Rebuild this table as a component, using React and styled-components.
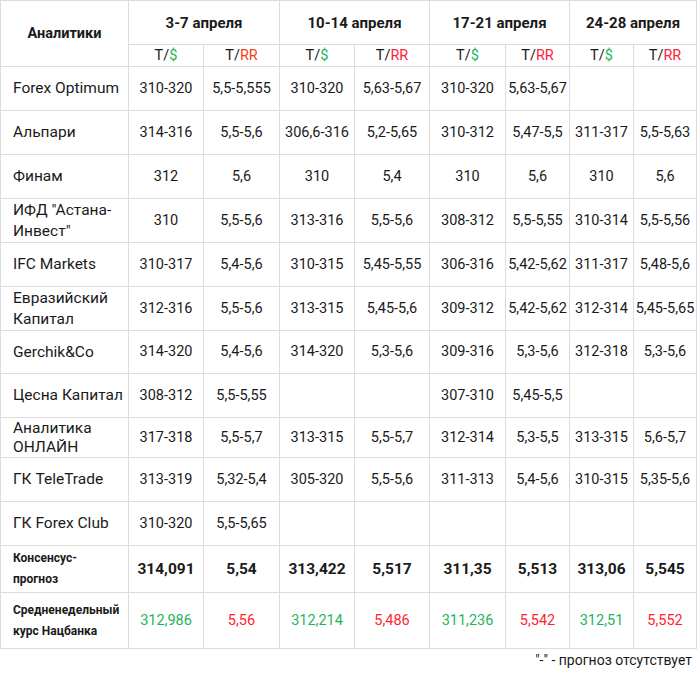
import React from 'react'
import styled, { createGlobalStyle } from 'styled-components'

const GlobalStyle = createGlobalStyle`
  body {
    margin: 0;
    background: #fff;
    font-family: Roboto, "Liberation Sans", sans-serif;
    color: #1a1a1a;
  }
`

const Table = styled.table`
  border-collapse: collapse;
  table-layout: fixed;
  width: 696px;
  font-size: 14px;
`

const Row = styled.tr`
  height: ${props => props.h}px;
`

const HeadCell = styled.th`
  border: 1px solid #dcdcdc;
  padding: 0;
  font-weight: bold;
  font-size: ${props => props.small ? 14.5 : 15}px;
  text-align: center;
  vertical-align: middle;
`

const SubCell = styled.td`
  border: 1px solid #dcdcdc;
  padding: 0;
  text-align: center;
  font-size: 14.5px;
  line-height: 20px;
`

const NameCell = styled.td`
  border: 1px solid #dcdcdc;
  padding: 0 2px 0 12px;
  line-height: ${props => props.tight ? 19 : 21}px;
  font-weight: ${props => props.bold ? 'bold' : 'normal'};
  font-size: ${props => props.bold ? 12 : 15.5}px;
`

const Cell = styled.td`
  border: 1px solid #dcdcdc;
  padding: 0 1px;
  text-align: center;
  white-space: nowrap;
  line-height: 20px;
  font-weight: ${props => props.bold ? 'bold' : 'normal'};
  font-size: ${props => props.bold ? 15.5 : 14.5}px;
  color: ${props => props.tone === 'green' ? '#1db55c' : props.tone === 'red' ? '#ff1f2e' : '#1a1a1a'};
`

const Green = styled.span`
  color: #1db55c;
`

const Red = styled.span`
  color: ${props => props.orange ? '#ff3a1a' : '#ff2040'};
`

const Note = styled.div`
  width: 696px;
  text-align: right;
  font-size: 14px;
  line-height: 22px;
  padding-right: 4px;
  box-sizing: border-box;
`

const widths = [128, 75, 76, 75, 75, 76, 64, 64, 63]
const weeks = ['3-7 апреля', '10-14 апреля', '17-21 апреля', '24-28 апреля']

const rows = [
  { name: ['Forex Optimum'], h: 44, v: ['310-320', '5,5-5,555', '310-320', '5,63-5,67', '310-320', '5,63-5,67', '', ''] },
  { name: ['Альпари'], h: 44, v: ['314-316', '5,5-5,6', '306,6-316', '5,2-5,65', '310-312', '5,47-5,5', '311-317', '5,5-5,63'] },
  { name: ['Финам'], h: 44, v: ['312', '5,6', '310', '5,4', '310', '5,6', '310', '5,6'] },
  { name: ['ИФД "Астана-', 'Инвест"'], h: 44, v: ['310', '5,5-5,6', '313-316', '5,5-5,6', '308-312', '5,5-5,55', '310-314', '5,5-5,56'] },
  { name: ['IFC Markets'], h: 44, v: ['310-317', '5,4-5,6', '310-315', '5,45-5,55', '306-316', '5,42-5,62', '311-317', '5,48-5,6'] },
  { name: ['Евразийский', 'Капитал'], h: 44, v: ['312-316', '5,5-5,6', '313-315', '5,45-5,6', '309-312', '5,42-5,62', '312-314', '5,45-5,65'] },
  { name: ['Gerchik&Co'], h: 43, v: ['314-320', '5,4-5,6', '314-320', '5,3-5,6', '309-316', '5,3-5,6', '312-318', '5,3-5,6'] },
  { name: ['Цесна Капитал'], h: 44, v: ['308-312', '5,5-5,55', '', '', '307-310', '5,45-5,5', '', ''] },
  { name: ['Аналитика', 'ОНЛАЙН'], h: 40, tight: true, v: ['317-318', '5,5-5,7', '313-315', '5,5-5,7', '312-314', '5,3-5,5', '313-315', '5,6-5,7'] },
  { name: ['ГК TeleTrade'], h: 44, v: ['313-319', '5,32-5,4', '305-320', '5,5-5,6', '311-313', '5,4-5,6', '310-315', '5,35-5,6'] },
  { name: ['ГК Forex Club'], h: 44, v: ['310-320', '5,5-5,65', '', '', '', '', '', ''] },
]

const consensus = ['314,091', '5,54', '313,422', '5,517', '311,35', '5,513', '313,06', '5,545']
const bank = ['312,986', '5,56', '312,214', '5,486', '311,236', '5,542', '312,51', '5,552']

const Lines = ({ parts }) => parts.map((p, i) => (
  <React.Fragment key={i}>{i > 0 && <br />}{p}</React.Fragment>
))

export default function App() {
  return (
    <>
      <GlobalStyle />
      <Table>
        <colgroup>
          {widths.map((w, i) => <col key={i} style={{ width: w }} />)}
        </colgroup>
        <thead>
          <Row h={44}>
            <HeadCell rowSpan={2} small>Аналитики</HeadCell>
            {weeks.map(w => <HeadCell key={w} colSpan={2}>{w}</HeadCell>)}
          </Row>
          <Row h={22}>
            {weeks.map((w, i) => (
              <React.Fragment key={w}>
                <SubCell>T/<Green>$</Green></SubCell>
                <SubCell>T/<Red orange={i === 0}>RR</Red></SubCell>
              </React.Fragment>
            ))}
          </Row>
        </thead>
        <tbody>
          {rows.map(r => (
            <Row key={r.name.join(' ')} h={r.h}>
              <NameCell tight={r.tight}><Lines parts={r.name} /></NameCell>
              {r.v.map((v, i) => <Cell key={i}>{v}</Cell>)}
            </Row>
          ))}
          <Row h={47}>
            <NameCell bold>Консенсус-<br />прогноз</NameCell>
            {consensus.map((v, i) => <Cell key={i} bold>{v}</Cell>)}
          </Row>
          <Row h={56}>
            <NameCell bold>Средненедельный<br />курс Нацбанка</NameCell>
            {bank.map((v, i) => <Cell key={i} tone={i % 2 ? 'red' : 'green'}>{v}</Cell>)}
          </Row>
        </tbody>
      </Table>
      <Note>"-" - прогноз отсутствует</Note>
    </>
  )
}
